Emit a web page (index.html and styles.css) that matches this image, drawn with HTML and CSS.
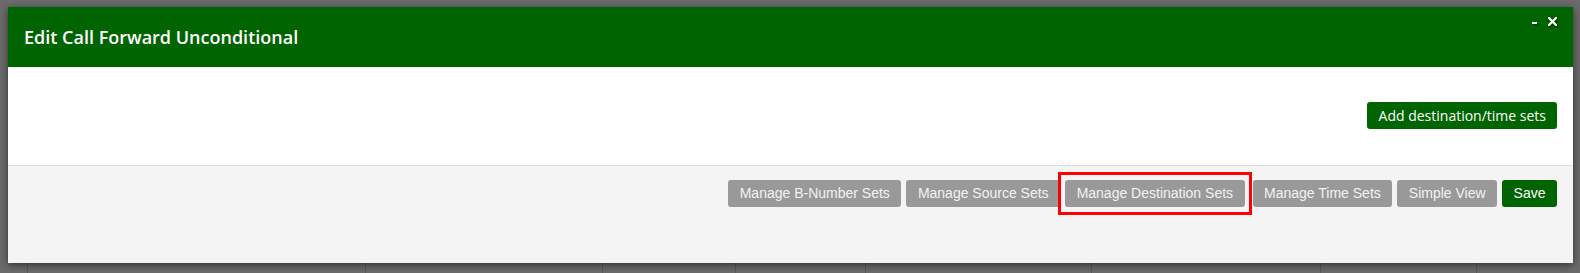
FILE: index.html
```html
<!DOCTYPE html>
<html lang="en">
<head>
<meta charset="utf-8">
<title>Edit Call Forward Unconditional</title>
<link rel="stylesheet" href="styles.css">
</head>
<body>
<div class="page">
  <div class="dialog">
    <div class="dlg-head">
      <span class="dlg-title">Edit Call Forward Unconditional</span>
      <div class="dlg-controls">
        <svg class="ctl" width="5" height="9" viewBox="0 0 5 9"><rect x="0" y="5" width="5" height="2" fill="#fff"/></svg>
        <svg class="ctl" width="9" height="9" viewBox="0 0 9 9"><path d="M1 1 L8 8 M8 1 L1 8" stroke="#fff" stroke-width="2.2" stroke-linecap="square"/></svg>
      </div>
    </div>
    <div class="dlg-body">
      <button class="btn-add">Add destination/time sets</button>
    </div>
    <div class="dlg-foot">
      <button class="btn">Manage B-Number Sets</button>
      <button class="btn">Manage Source Sets</button>
      <span class="highlight"><button class="btn">Manage Destination Sets</button></span>
      <button class="btn">Manage Time Sets</button>
      <button class="btn">Simple View</button>
      <button class="btn btn-save">Save</button>
    </div>
  </div>
  <div class="backdrop">
    <div class="cell"></div><div class="cell"></div><div class="cell"></div>
    <div class="cell"></div><div class="cell"></div><div class="cell"></div>
    <div class="cell"></div><div class="cell"></div><div class="cell"></div>
  </div>
</div>
</body>
</html>
```

FILE: styles.css
```css
html, body {
  margin: 0;
  padding: 0;
}
body {
  background: #6b6b6b;
  width: 1580px;
  height: 273px;
  overflow: hidden;
  font-family: "Open Sans", "Liberation Sans", sans-serif;
}
.page {
  padding-top: 7px;
}
.dialog {
  position: relative;
  z-index: 2;
  margin: 0 7px 0 8px;
  box-shadow: 0 2px 8px rgba(0, 0, 0, 0.55);
}
.dlg-head {
  position: relative;
  height: 60px;
  background: #006400;
  display: flex;
  align-items: center;
  padding: 0 16px;
}
.dlg-title {
  font-family: "Open Sans", sans-serif;
  font-weight: 600;
  font-size: 18px;
  color: #fff;
}
.dlg-controls {
  position: absolute;
  top: 10px;
  right: 16px;
  display: flex;
  align-items: flex-start;
  gap: 11px;
}
.ctl {
  display: block;
  filter: drop-shadow(1px 1px 1px rgba(0, 0, 0, 0.6));
}
.dlg-body {
  box-sizing: border-box;
  height: 98px;
  background: #fff;
  display: flex;
  justify-content: flex-end;
  align-items: flex-start;
  padding: 35px 16px 0 0;
}
.btn-add {
  font-family: "Open Sans", sans-serif;
  font-size: 14px;
  color: #fff;
  background: #006400;
  border: none;
  border-radius: 3px;
  height: 27px;
  padding: 0 11px 0 12px;
  line-height: 27px;
  margin: 0;
}
.dlg-foot {
  box-sizing: border-box;
  height: 98px;
  background: #f4f4f4;
  border-top: 1px solid #dcdcdc;
  display: flex;
  justify-content: flex-end;
  align-items: flex-start;
  gap: 5px;
  padding: 14px 16px 0 0;
}
.btn {
  font-family: "Liberation Sans", Arial, sans-serif;
  font-size: 14px;
  color: #f2f2f2;
  background: #999;
  border: none;
  border-radius: 3px;
  height: 27px;
  line-height: 27px;
  padding: 0 11.5px;
  margin: 0;
  display: block;
}
.btn-save {
  background: #006400;
  color: #fff;
}
.highlight {
  position: relative;
  display: block;
  margin-right: 3px;
}
.highlight::after {
  content: "";
  position: absolute;
  top: -8px;
  bottom: -8px;
  left: -7px;
  right: -7px;
  border: 3px solid #f00;
  pointer-events: none;
}
.backdrop {
  display: grid;
  grid-template-columns: 27px 338px 237px 133px 130px 226px 229px 156px 1fr;
  height: 10px;
}
.cell {
  border-left: 1px solid #5a5a5a;
}
.cell:first-child {
  border-left: none;
}
```
